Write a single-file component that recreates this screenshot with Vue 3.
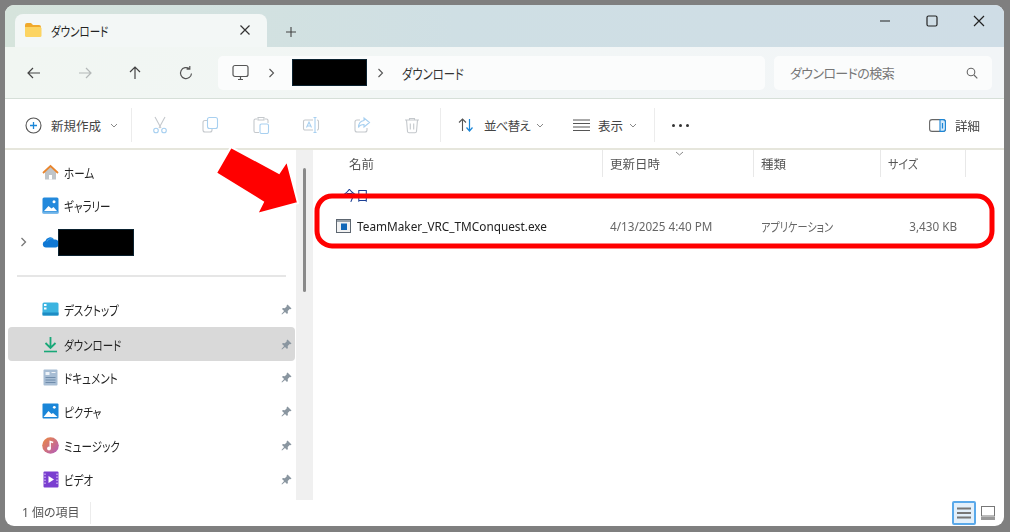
<template>
  <div class="window">
    <div class="frame">
      <div class="titlebar">
        <div class="tab">
          <svg class="folder" width="18" height="16" viewBox="0 0 18 16">
            <path d="M1 3a2 2 0 0 1 2-2h4l2 2h6a2 2 0 0 1 2 2v1H1z" fill="#f0a92c" />
            <path d="M1 5h15a1.5 1.5 0 0 1 1.5 1.500v7a1.500 1.500 0 0 1-1.500 1.500H2.500A1.500 1.500 0 0 1 1 13.500z" fill="#fcd462" />
          </svg>
          <div class="tab-title"><span class="narrow">ダウンロード</span></div>
          <svg class="tab-close" width="12" height="12" viewBox="0 0 12 12">
            <path d="M1.500 1.500l9 9M10.500 1.500l-9 9" stroke="#333" stroke-width="1.200" />
          </svg>
        </div>
        <svg class="tab-add" width="12" height="12" viewBox="0 0 12 12">
          <path d="M6 1v10M1 6h10" stroke="#444" stroke-width="1.100" />
        </svg>
        <div class="controls">
          <svg width="12" height="12" viewBox="0 0 12 12"><path d="M1 6h10" stroke="#222" stroke-width="1.200" /></svg>
          <svg width="12" height="12" viewBox="0 0 12 12"><rect x="1" y="1" width="10" height="10" rx="1.500" fill="none" stroke="#222" stroke-width="1.200" /></svg>
          <svg width="12" height="12" viewBox="0 0 12 12"><path d="M1 1l10 10M11 1L1 11" stroke="#222" stroke-width="1.200" /></svg>
        </div>
      </div>

      <div class="navbar">
        <div class="nav-buttons">
          <svg width="16" height="16" viewBox="0 0 16 16"><path d="M14 8H2M7 3L2 8l5 5" fill="none" stroke="#444" stroke-width="1.200" /></svg>
          <svg width="16" height="16" viewBox="0 0 16 16"><path d="M2 8h12M9 3l5 5-5 5" fill="none" stroke="#b4b8b8" stroke-width="1.200" /></svg>
          <svg width="16" height="16" viewBox="0 0 16 16"><path d="M8 14V2M3 7l5-5 5 5" fill="none" stroke="#444" stroke-width="1.200" /></svg>
          <svg width="16" height="16" viewBox="0 0 16 16"><path d="M13.500 8.500A5.500 5.500 0 1 1 11.500 3.800M11.800 1v3.200H8.600" fill="none" stroke="#555" stroke-width="1.200" /></svg>
        </div>
        <div class="address">
          <svg width="17" height="17" viewBox="0 0 17 17">
            <rect x="1" y="1.500" width="15" height="11" rx="2" fill="none" stroke="#555" stroke-width="1.200" />
            <path d="M6 15.500h5M8.500 12.500v3" stroke="#555" stroke-width="1.200" />
          </svg>
          <svg class="crumb" width="7" height="10" viewBox="0 0 7 10"><path d="M1.500 1l4 4-4 4" fill="none" stroke="#555" stroke-width="1.100" /></svg>
          <div class="redact redact-path"></div>
          <svg class="crumb" width="7" height="10" viewBox="0 0 7 10"><path d="M1.500 1l4 4-4 4" fill="none" stroke="#555" stroke-width="1.100" /></svg>
          <span class="address-text narrow">ダウンロード</span>
        </div>
        <div class="search">
          <span class="search-text">ダウンロードの検索</span>
          <svg width="12" height="12" viewBox="0 0 12 12"><circle cx="5" cy="5" r="3.800" fill="none" stroke="#666" stroke-width="1.100" /><path d="M8 8l3.300 3.300" stroke="#666" stroke-width="1.200" /></svg>
        </div>
      </div>

      <div class="toolbar">
        <div class="new-btn">
          <svg width="17" height="17" viewBox="0 0 17 17">
            <circle cx="8.500" cy="8.500" r="7.500" fill="none" stroke="#555" stroke-width="1.100" />
            <path d="M8.500 5v7M5 8.500h7" stroke="#1a86d8" stroke-width="1.300" />
          </svg>
          <span>新規作成</span>
          <svg class="chev" width="8" height="5" viewBox="0 0 8 5"><path d="M1 1l3 3 3-3" fill="none" stroke="#888" /></svg>
        </div>
        <div class="sep"></div>
        <div class="disabled-icons">
          <svg width="18" height="18" viewBox="0 0 18 18">
            <path d="M4 1l6 11M14 1L8 12" fill="none" stroke="#c4c8cc" stroke-width="1.100" />
            <circle cx="5" cy="14.500" r="2.300" fill="none" stroke="#a8d0f0" stroke-width="1.100" />
            <circle cx="13" cy="14.500" r="2.300" fill="none" stroke="#a8d0f0" stroke-width="1.100" />
          </svg>
          <svg width="18" height="18" viewBox="0 0 18 18">
            <rect x="6.500" y="1.500" width="10" height="11" rx="2" fill="none" stroke="#a8d0f0" stroke-width="1.100" />
            <path d="M6 4.500H4a2 2 0 0 0-2 2V14a2 2 0 0 0 2 2h5a2 2 0 0 0 2-2v-1" fill="none" stroke="#c4c8cc" stroke-width="1.100" />
          </svg>
          <svg width="18" height="18" viewBox="0 0 18 18">
            <path d="M5 3H3.500A1.500 1.500 0 0 0 2 4.500V15a1.500 1.500 0 0 0 1.500 1.500H7M13 3h1.500A1.500 1.500 0 0 1 16 4.500V7M6 1.500h6V4H6z" fill="none" stroke="#c4c8cc" stroke-width="1.100" />
            <rect x="8" y="8" width="8.500" height="9.500" rx="1.500" fill="none" stroke="#a8d0f0" stroke-width="1.100" />
          </svg>
          <svg width="18" height="18" viewBox="0 0 18 18">
            <path d="M11 4H3a1.500 1.500 0 0 0-1.500 1.500v7A1.500 1.500 0 0 0 3 14h8M15 4a1.500 1.500 0 0 1 1.500 1.500v7A1.500 1.500 0 0 1 15 14" fill="none" stroke="#c4c8cc" stroke-width="1.100" />
            <path d="M4.500 11.500L7 6l2.500 5.500M5.300 10h3.400" fill="none" stroke="#a8d0f0" stroke-width="1.100" />
            <path d="M13 2v14M11.500 1.500h3M11.500 16.500h3" fill="none" stroke="#a8d0f0" stroke-width="1.100" />
          </svg>
          <svg width="18" height="18" viewBox="0 0 18 18">
            <path d="M7 4H4a2 2 0 0 0-2 2v8a2 2 0 0 0 2 2h8a2 2 0 0 0 2-2v-2" fill="none" stroke="#c4c8cc" stroke-width="1.100" />
            <path d="M11 2l5.500 4.500L11 11V8.500c-3 0-4.500 1-5.500 3 0-4 2-6.500 5.500-7z" fill="none" stroke="#a8d0f0" stroke-width="1.100" />
          </svg>
          <svg width="18" height="18" viewBox="0 0 18 18">
            <path d="M2 4h14M6.500 4V2.500h5V4M3.500 4l1 11.500a1.500 1.500 0 0 0 1.500 1.300h6a1.500 1.500 0 0 0 1.500-1.300l1-11.500M7.300 7.500v6M10.700 7.500v6" fill="none" stroke="#c4c8cc" stroke-width="1.100" />
          </svg>
        </div>
        <div class="sep"></div>
        <div class="text-btn sort-btn">
          <svg width="16" height="16" viewBox="0 0 16 16">
            <path d="M4.500 14V2M1 5.500L4.500 2 8 5.500" fill="none" stroke="#555" stroke-width="1.100" />
            <path d="M11.500 2v12M8.500 10.500l3 3.500 3-3.500" fill="none" stroke="#1a86d8" stroke-width="1.200" />
          </svg>
          <span class="sort-label">並べ替え</span>
          <svg class="chev" width="8" height="5" viewBox="0 0 8 5"><path d="M1 1l3 3 3-3" fill="none" stroke="#888" /></svg>
        </div>
        <div class="text-btn view-btn">
          <svg width="17" height="14" viewBox="0 0 17 14">
            <path d="M0 2h17M0 5.500h17M0 9h17M0 12.500h17" stroke="#555" stroke-width="1" />
          </svg>
          <span>表示</span>
          <svg class="chev" width="8" height="5" viewBox="0 0 8 5"><path d="M1 1l3 3 3-3" fill="none" stroke="#888" /></svg>
        </div>
        <div class="sep sep-c"></div>
        <div class="dots"><i></i><i></i><i></i></div>
        <div class="text-btn detail-btn">
          <svg width="17" height="13" viewBox="0 0 17 13">
            <rect x="0.600" y="0.600" width="15.800" height="11.800" rx="2.500" fill="none" stroke="#666" stroke-width="1.100" />
            <path d="M11 0.600h3a2.500 2.500 0 0 1 2.400 2.500v6.800a2.500 2.500 0 0 1-2.400 2.500h-3z" fill="#d5e9f9" stroke="#1a86d8" stroke-width="1.100" />
            <path d="M13.500 4v5.500" stroke="#1a86d8" stroke-width="1.200" />
          </svg>
          <span>詳細</span>
        </div>
      </div>

      <div class="body">
        <aside class="sidebar">
          <div class="side-item first">
            <svg width="17" height="17" viewBox="0 0 17 17">
              <path d="M3 8v7.500h11V8L8.500 3z" fill="#bfc4c8" />
              <path d="M7 15.500v-4.500h3v4.500z" fill="#fff" />
              <path d="M1 9l7.500-7 7.500 7" fill="none" stroke="#e8852e" stroke-width="1.800" />
            </svg>
            <span class="side-label"><span class="narrow">ホーム</span></span>
          </div>
          <div class="side-item first">
            <svg width="17" height="17" viewBox="0 0 17 17">
              <rect x="0.500" y="0.500" width="16" height="16" rx="1.500" fill="#2389dc" />
              <path d="M2 14l4.500-5 3 2.500 2-1.500 3.500 4z" fill="#fff" />
              <circle cx="12" cy="4.800" r="1.500" fill="#fff" />
              <path d="M0.500 14.500h16v2h-16z" fill="#6db3e8" />
            </svg>
            <span class="side-label"><span class="narrow">ギャラリー</span></span>
          </div>
          <div class="side-item cloud-item">
            <svg class="expand" width="7" height="10" viewBox="0 0 7 10"><path d="M1.500 1l4 4-4 4" fill="none" stroke="#777" stroke-width="1.300" /></svg>
            <svg width="17" height="12" viewBox="0 0 17 12">
              <path d="M4 11.500A3.300 3.300 0 0 1 3.300 5 4.800 4.800 0 0 1 12 3.600 3.800 3.800 0 0 1 16.800 8c0 2-1.500 3.500-3.300 3.500z" fill="#0f78d4" />
              <path d="M5 5.500a4.500 4.500 0 0 1 7-1.900" fill="none" stroke="#3aa0ec" stroke-width="1" />
            </svg>
            <div class="redact redact-cloud"></div>
          </div>
          <div class="side-divider"></div>

          <div
            v-for="item in pinned"
            :key="item.label"
            class="side-item pinned"
            :class="{ selected: item.selected }"
          >
            <div class="side-icon">
              <svg v-if="item.icon === 'desktop'" width="17" height="14" viewBox="0 0 17 14">
                <rect x="0.500" y="0.500" width="16" height="13" rx="1.500" fill="#3cb4e0" />
                <rect x="0.500" y="10.500" width="16" height="3" fill="#1d8cc4" />
                <rect x="2" y="2" width="2.500" height="2" fill="#fff" />
                <rect x="2" y="5.500" width="2.500" height="2" fill="#fff" />
              </svg>
              <svg v-else-if="item.icon === 'download'" width="17" height="17" viewBox="0 0 17 17">
                <path d="M8.500 1v10M3.500 7l5 5 5-5" fill="none" stroke="#18a878" stroke-width="1.800" />
                <path d="M2 15.500h13" stroke="#18a878" stroke-width="1.600" />
              </svg>
              <svg v-else-if="item.icon === 'doc'" width="15" height="17" viewBox="0 0 15 17">
                <rect x="0.500" y="0.500" width="14" height="16" rx="1" fill="#a7bdd4" />
                <rect x="2.500" y="3" width="4" height="3" fill="#eef3f8" />
                <rect x="8.500" y="3" width="4" height="1" fill="#eef3f8" />
                <path d="M2.500 8.500h10M2.500 11h10M2.500 13.500h10" stroke="#6f8cab" />
              </svg>
              <svg v-else-if="item.icon === 'picture'" width="17" height="16" viewBox="0 0 17 16">
                <rect x="0.500" y="0.500" width="16" height="15" rx="1" fill="#1a86d8" />
                <path d="M1.500 14l5-6 3 3 1.500-1 4.500 4z" fill="#fff" />
                <circle cx="12.300" cy="4.300" r="1.400" fill="#fff" />
              </svg>
              <svg v-else-if="item.icon === 'music'" width="17" height="17" viewBox="0 0 17 17">
                <defs>
                  <linearGradient id="music-bg" x1="0" y1="0" x2="1" y2="1">
                    <stop offset="0" stop-color="#ee8a3c" />
                    <stop offset="1" stop-color="#b05ac0" />
                  </linearGradient>
                </defs>
                <circle cx="8.500" cy="8.500" r="8.300" fill="url(#music-bg)" />
                <circle cx="7" cy="11.500" r="1.900" fill="#fff" />
                <path d="M8.200 11.500V4.500l3 1" fill="none" stroke="#fff" stroke-width="1.400" />
              </svg>
              <svg v-else width="16" height="17" viewBox="0 0 16 17">
                <rect x="0.500" y="0.500" width="15" height="16" rx="1" fill="#7a3fd0" />
                <path d="M5.500 5v7l5.500-3.500z" fill="#fff" />
                <path d="M2 2.500v12M14 2.500v12" stroke="#c8a8f0" stroke-width="1.500" stroke-dasharray="1.500 1.500" />
              </svg>
            </div>
            <span class="side-label"><span class="narrow">{{ item.label }}</span></span>
            <svg class="pin" width="11" height="11" viewBox="0 0 11 11">
              <path d="M6.500 0.500l4 4-1 .8-.8-.2-2 2 .2 1.900-.9.900L4 7.900 1 10.500l-.5-.5L3.100 7 1 5l.9-.9 1.900.2 2-2-.2-.8z" fill="#8a96a0" />
            </svg>
          </div>
        </aside>
        <div class="scroll-track"><div class="scroll-thumb"></div></div>

        <main class="content">
          <div class="list-head">
            <div class="col col-head">名前</div>
            <div class="col col-head">更新日時</div>
            <div class="col col-head">種類</div>
            <div class="col col-head"><span class="narrow size-head">サイズ</span></div>
            <svg class="sort-arrow" width="9" height="5" viewBox="0 0 9 5"><path d="M1 1l3.500 3L8 1" fill="none" stroke="#888" /></svg>
          </div>
          <div class="group">今日</div>
          <div class="file-row">
            <div class="col file-name">
              <svg width="15" height="14" viewBox="0 0 15 14">
                <rect x="0.500" y="0.500" width="14" height="13" fill="#f2f2f2" stroke="#5d6670" />
                <rect x="1" y="1" width="13" height="2" fill="#9aa3ab" />
                <rect x="5" y="4.500" width="6" height="6.500" fill="#1268b8" />
              </svg>
              <span>TeamMaker_VRC_TMConquest.exe</span>
            </div>
            <div class="col meta">4/13/2025 4:40 PM</div>
            <div class="col meta"><span class="narrow type-text">アプリケーション</span></div>
            <div class="col meta size">3,430 KB</div>
          </div>
        </main>
      </div>

      <div class="statusbar">
        <span class="count">1 個の項目</span>
        <div class="view-toggle">
          <div class="toggle active">
            <svg width="14" height="12" viewBox="0 0 14 12"><path d="M0 1.500h14M0 6h14M0 10.500h14" stroke="#777" stroke-width="1.800" /></svg>
          </div>
          <div class="toggle tile">
            <svg width="14" height="14" viewBox="0 0 14 14">
              <rect x="0.500" y="0.500" width="13" height="9.500" fill="#fff" stroke="#777" />
              <rect x="0" y="11" width="14" height="3" fill="#999" />
            </svg>
          </div>
        </div>
      </div>
    </div>

    <svg class="callout" width="1010" height="532" viewBox="0 0 1010 532">
      <polygon points="231,147 216,173 263,202 257,214 298,203 287,161 279,173" fill="#ff0000" stroke="#fff" stroke-width="2" stroke-linejoin="miter" />
      <rect x="317" y="196" width="675" height="50" rx="15" fill="none" stroke="#ff0000" stroke-width="5" />
    </svg>
  </div>
</template>

<script setup>
const pinned = [
  { label: "デスクトップ", icon: "desktop" },
  { label: "ダウンロード", icon: "download", selected: true },
  { label: "ドキュメント", icon: "doc" },
  { label: "ピクチャ", icon: "picture" },
  { label: "ミュージック", icon: "music" },
  { label: "ビデオ", icon: "video" },
];
</script>

<style scoped>
.window {
  position: relative;
  width: 1010px;
  height: 532px;
  box-sizing: border-box;
  padding: 5px 6px 6px 5px;
  background: #7f7f7f;
  overflow: hidden;
  font-family: "Noto Sans", "Noto Sans CJK JP", sans-serif;
  font-feature-settings: "palt";
  color: #222;
}

.frame {
  display: flex;
  flex-direction: column;
  height: 100%;
  background: #fff;
  border-radius: 9px;
  overflow: hidden;
  filter: blur(0.4px);
}

/* the reference uses Yu Gothic UI, whose kana are much narrower than Noto's */
.narrow {
  display: inline-block;
  transform: scaleX(0.81);
  transform-origin: left center;
}

.titlebar {
  display: flex;
  align-items: flex-end;
  height: 42px;
  flex-shrink: 0;
  padding-left: 10px;
  background: linear-gradient(90deg, #d6e4dc 0%, #cfdfe4 45%, #cfdde6 100%);
}

.tab {
  display: flex;
  align-items: center;
  width: 252px;
  height: 33px;
  padding: 0 16px 0 8px;
  box-sizing: border-box;
  background: #f3f7f6;
  border-radius: 8px 8px 0 0;
}

.folder {
  margin-left: 1px;
  margin-bottom: 2px;
}

.tab-title {
  margin-left: 9px;
  font-size: 13px;
  flex: 1;
}

.tab-close {
  margin-bottom: 1px;
}

.tab-add {
  margin: 0 0 9px 18px;
}

.controls {
  display: flex;
  gap: 35px;
  margin-left: auto;
  margin-right: 19px;
  align-self: flex-start;
  margin-top: 10px;
}

.navbar {
  display: flex;
  align-items: center;
  height: 51px;
  flex-shrink: 0;
  background: linear-gradient(90deg, #f1f6f2 0%, #f2f6f6 50%, #f2f5f7 100%);
  border-bottom: 1px solid #d6dfd8;
}

.nav-buttons {
  display: flex;
  gap: 34.500px;
  width: 213px;
  padding-left: 21px;
  box-sizing: border-box;
}

.address {
  display: flex;
  align-items: center;
  width: 547px;
  height: 34px;
  padding-left: 14px;
  box-sizing: border-box;
  background: #fbfcfc;
  border-radius: 5px;
}

.crumb {
  margin-left: 19px;
}

.redact {
  background: #000;
  border: 1px solid #0b2230;
  box-sizing: border-box;
}

.redact-path {
  width: 75px;
  height: 27px;
  margin-left: 17px;
}

.redact-path + .crumb {
  margin-left: 10px;
}

.address-text {
  margin-left: 18px;
  font-size: 14px;
  color: #333;
}

.search {
  display: flex;
  align-items: center;
  justify-content: space-between;
  width: 218px;
  height: 34px;
  margin-left: 9px;
  padding: 0 14px 0 16px;
  box-sizing: border-box;
  background: #fbfcfc;
  border-radius: 5px;
}

.search-text {
  font-size: 13px;
  letter-spacing: -0.6px;
  color: #777;
}

.toolbar {
  display: flex;
  align-items: center;
  height: 51px;
  flex-shrink: 0;
  padding: 3px 24px 0 20px;
  box-sizing: border-box;
  background: #fff;
  border-bottom: 2px solid #e6e6dc;
  font-size: 12.500px;
  color: #444;
}

.new-btn {
  display: flex;
  align-items: center;
  width: 106px;
  flex-shrink: 0;
}

.new-btn span {
  margin-left: 9px;
}

.chev {
  margin-left: 6px;
}

.new-btn .chev {
  margin-left: 9px;
}

.sep {
  width: 1px;
  height: 34px;
  background: #ececec;
  flex-shrink: 0;
}

.disabled-icons {
  display: flex;
  gap: 32.400px;
  padding-left: 19px;
  width: 308px;
  box-sizing: border-box;
  flex-shrink: 0;
}

.text-btn {
  display: flex;
  align-items: center;
}

.text-btn span {
  margin-left: 8px;
}

.sort-btn {
  margin-left: 17px;
}

.text-btn .sort-label {
  margin-left: 10px;
  letter-spacing: -0.8px;
}

.view-btn {
  margin-left: 29px;
}

.sep-c {
  margin-left: 17px;
}

.dots {
  display: flex;
  gap: 4px;
  margin-left: 17px;
}

.dots i {
  display: block;
  width: 3px;
  height: 3px;
  border-radius: 50%;
  background: #333;
}

.detail-btn {
  margin-left: auto;
}

.detail-btn span {
  margin-left: 9px;
}

.body {
  display: flex;
  flex: 1;
  min-height: 0;
}

.sidebar {
  width: 291px;
  flex-shrink: 0;
  padding-top: 6px;
  box-sizing: border-box;
  font-size: 13px;
  color: #222;
}

.side-item {
  display: flex;
  align-items: center;
  height: 34px;
  margin-left: 3px;
  margin-right: 1px;
  box-sizing: border-box;
}

.side-icon {
  display: flex;
  justify-content: center;
  width: 17px;
  flex-shrink: 0;
}

.side-item.first {
  height: 33px;
  padding-left: 34px;
}

.cloud-item {
  padding-left: 12px;
  margin-top: 3px;
}

.expand {
  margin-right: 15px;
}

.redact-cloud {
  width: 76px;
  height: 27px;
  margin-left: -1px;
}

.side-divider {
  height: 2px;
  margin: 16px 10px 15px 12px;
  background: #e6e6e6;
}

.pinned {
  padding-left: 34px;
  padding-right: 3px;
}

.selected {
  margin-top: 1px;
  margin-bottom: -1px;
  background: #d9d9d9;
  border-radius: 4px;
}

.side-label {
  flex: 1;
  margin-left: 5px;
}

.scroll-track {
  display: flex;
  justify-content: center;
  width: 17px;
  flex-shrink: 0;
  background: #f0f0f0;
  padding-top: 18px;
  box-sizing: border-box;
}

.scroll-thumb {
  width: 3px;
  height: 124px;
  border-radius: 2px;
  background: #8a8a8a;
}

.content {
  flex: 1;
  min-width: 0;
  font-size: 12.500px;
}

.list-head,
.file-row {
  display: grid;
  grid-template-columns: 290px 151px 127px 85px;
  align-items: center;
}

.list-head {
  position: relative;
  height: 27px;
}

.col {
  padding-left: 7px;
}

.col-head {
  height: 100%;
  display: flex;
  align-items: center;
  color: #555;
  border-right: 1px solid #e8e8e8;
  box-sizing: border-box;
}

.col-head:first-child {
  padding-left: 36px;
}

.size-head {
  transform: scaleX(0.88);
}

.sort-arrow {
  position: absolute;
  left: 362px;
  top: 1px;
}

.group {
  height: 20px;
  margin: 8px 0 4px;
  padding-left: 30px;
  line-height: 20px;
  font-size: 13px;
  color: #1c3f94;
}

.file-row {
  height: 34px;
}

.file-name {
  display: flex;
  align-items: center;
  padding-left: 23px;
  font-size: 11.800px;
  color: #222;
}

.file-name span {
  margin-left: 6px;
}

.meta {
  color: #666;
  font-size: 11.700px;
}

.type-text {
  font-size: 12.500px;
}

.size {
  text-align: right;
  padding-right: 9px;
}

.statusbar {
  display: flex;
  align-items: center;
  justify-content: space-between;
  height: 26px;
  flex-shrink: 0;
  padding: 0 9px 0 17px;
  font-size: 12px;
  color: #555;
}

.count {
  padding-right: 10px;
  border-right: 1px solid #ececec;
  line-height: 22px;
}

.view-toggle {
  display: flex;
  align-items: center;
  gap: 5px;
}

.toggle {
  display: flex;
  align-items: center;
  justify-content: center;
  height: 24px;
  box-sizing: border-box;
}

.toggle.active {
  width: 24px;
  background: #e3f0fb;
  border: 2px solid #5aa9ea;
  border-radius: 2px;
}

.toggle.tile {
  width: 14px;
}

.callout {
  position: absolute;
  left: 0;
  top: 0;
  pointer-events: none;
}
</style>
